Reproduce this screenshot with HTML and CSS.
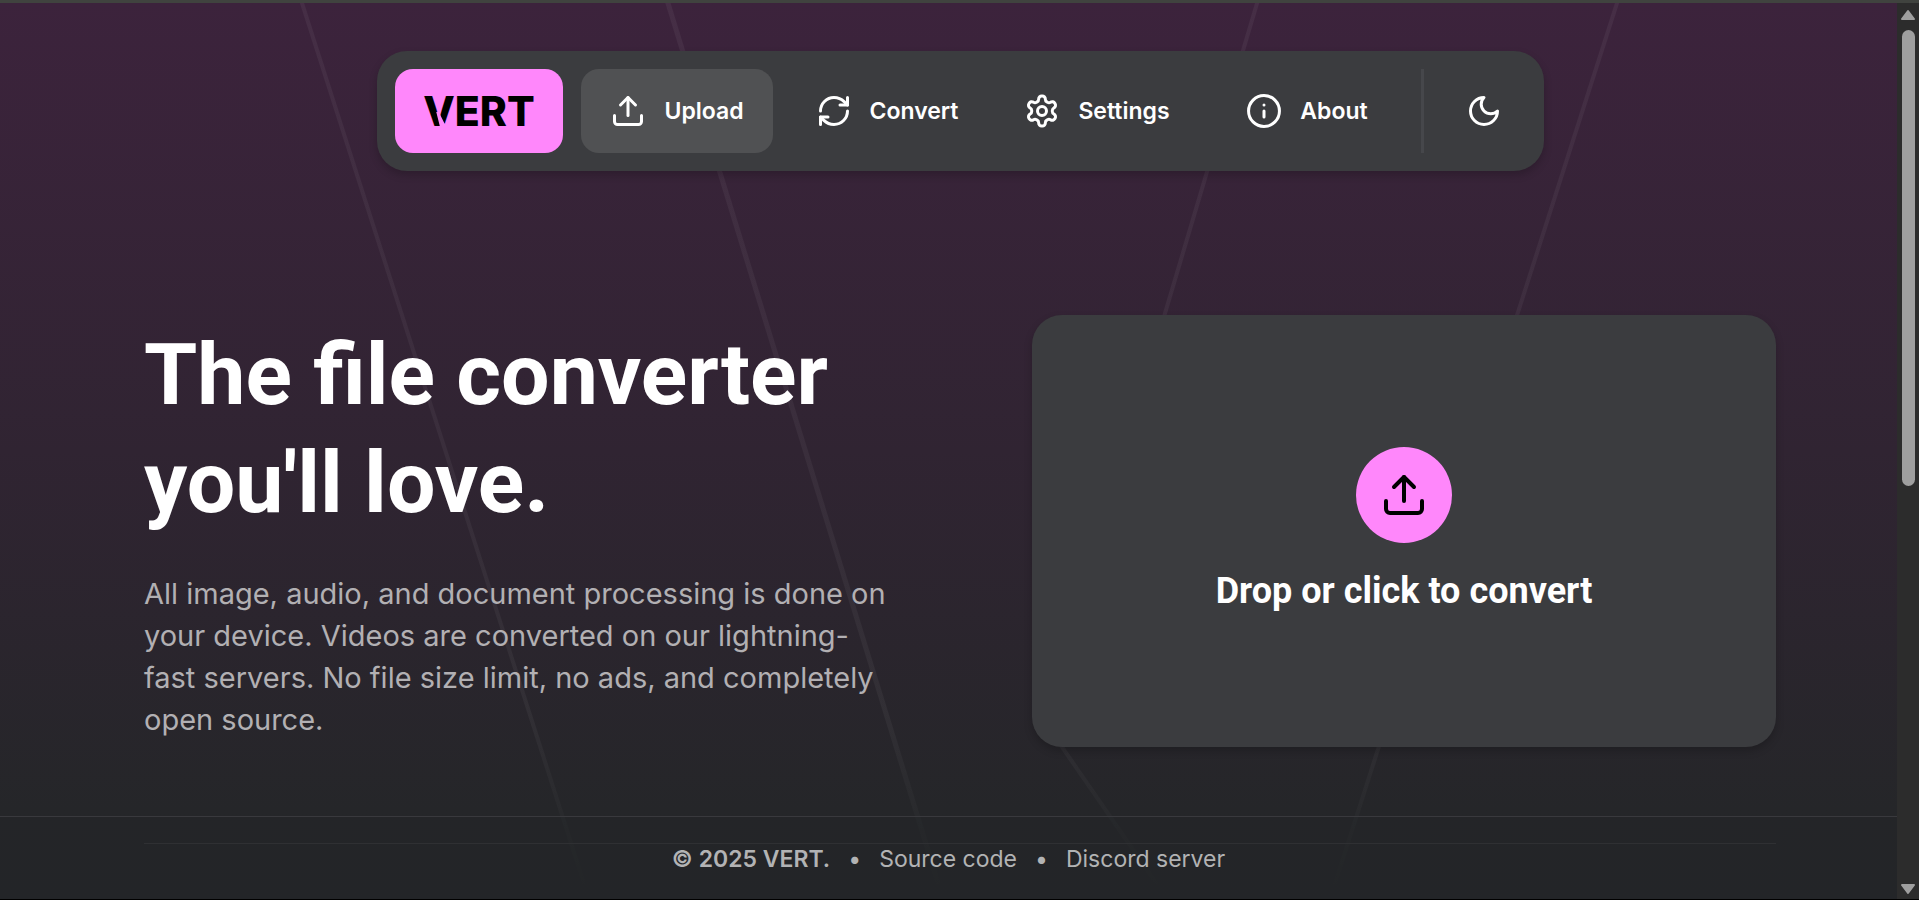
FILE: index.html
```html
<!DOCTYPE html>
<html lang="en">
<head>
<meta charset="utf-8">
<meta name="viewport" content="width=device-width, initial-scale=1">
<title>VERT</title>
<link rel="stylesheet" href="styles.css">
</head>
<body>
<div class="window">
  <div class="page">
    <svg class="backdrop" viewBox="0 0 1897 896" preserveAspectRatio="none" aria-hidden="true">
      <defs>
        <linearGradient id="fade" gradientUnits="userSpaceOnUse" x1="0" y1="0" x2="0" y2="890">
          <stop offset="0" stop-color="#fff" stop-opacity=".05"/>
          <stop offset=".8" stop-color="#fff" stop-opacity=".045"/>
          <stop offset="1" stop-color="#fff" stop-opacity="0"/>
        </linearGradient>
      </defs>
      <g fill="none" stroke="url(#fade)">
        <path stroke-width="4" d="M301 -3L588 893"/>
        <path stroke-width="5" d="M667 -3L942 893"/>
        <path stroke-width="4" d="M1258 -3L1044 718L1163 890"/>
        <path stroke-width="4" d="M1618 -3L1331 893"/>
      </g>
    </svg>

    <header class="top">
      <nav class="nav">
        <a class="logo" href="#"><span class="logo-text">VERT</span></a>
        <div class="links">
          <a class="link active" href="#">
            <svg class="icon" viewBox="0 0 24 24" aria-hidden="true"><path d="M12 3v12"/><path d="m17 8-5-5-5 5"/><path d="M21 15v4a2 2 0 0 1-2 2H5a2 2 0 0 1-2-2v-4"/></svg>
            <span>Upload</span>
          </a>
          <a class="link" href="#">
            <svg class="icon" viewBox="0 0 24 24" aria-hidden="true"><path d="M3 12a9 9 0 0 1 9-9 9.75 9.75 0 0 1 6.74 2.74L21 8"/><path d="M21 3v5h-5"/><path d="M21 12a9 9 0 0 1-9 9 9.75 9.75 0 0 1-6.74-2.74L3 16"/><path d="M8 16H3v5"/></svg>
            <span>Convert</span>
          </a>
          <a class="link" href="#">
            <svg class="icon" viewBox="0 0 24 24" aria-hidden="true"><path d="M12.22 2h-.44a2 2 0 0 0-2 2v.18a2 2 0 0 1-1 1.73l-.43.25a2 2 0 0 1-2 0l-.15-.08a2 2 0 0 0-2.73.73l-.22.38a2 2 0 0 0 .73 2.73l.15.1a2 2 0 0 1 1 1.72v.51a2 2 0 0 1-1 1.74l-.15.09a2 2 0 0 0-.73 2.73l.22.38a2 2 0 0 0 2.73.73l.15-.08a2 2 0 0 1 2 0l.43.25a2 2 0 0 1 1 1.73V20a2 2 0 0 0 2 2h.44a2 2 0 0 0 2-2v-.18a2 2 0 0 1 1-1.73l.43-.25a2 2 0 0 1 2 0l.15.08a2 2 0 0 0 2.73-.73l.22-.39a2 2 0 0 0-.73-2.73l-.15-.08a2 2 0 0 1-1-1.74v-.5a2 2 0 0 1 1-1.74l.15-.09a2 2 0 0 0 .73-2.73l-.22-.38a2 2 0 0 0-2.73-.73l-.15.08a2 2 0 0 1-2 0l-.43-.25a2 2 0 0 1-1-1.73V4a2 2 0 0 0-2-2z"/><circle cx="12" cy="12" r="3"/></svg>
            <span>Settings</span>
          </a>
          <a class="link" href="#">
            <svg class="icon" viewBox="0 0 24 24" aria-hidden="true"><circle cx="12" cy="12" r="10.3"/><path d="M12 16v-4"/><path d="M12 8h.01"/></svg>
            <span>About</span>
          </a>
        </div>
        <span class="divider"></span>
        <button class="theme" type="button" aria-label="Toggle theme">
          <svg class="icon" viewBox="0 0 24 24" aria-hidden="true"><path d="M12 3a6 6 0 0 0 9 9 9 9 0 1 1-9-9Z"/></svg>
        </button>
      </nav>
    </header>

    <main class="hero">
      <div class="intro">
        <h1 class="title">The file converter<br>you'll love.</h1>
        <p class="lead">All image, audio, and document processing is done on your device. Videos are converted on our lightning-fast servers. No file size limit, no ads, and completely open source.</p>
      </div>
      <button class="drop" type="button">
        <span class="drop-badge">
          <svg class="drop-icon" viewBox="0 0 24 24" aria-hidden="true"><path d="M12 3v12"/><path d="m17 8-5-5-5 5"/><path d="M21 15v4a2 2 0 0 1-2 2H5a2 2 0 0 1-2-2v-4"/></svg>
        </span>
        <span class="drop-text">Drop or click to convert</span>
      </button>
    </main>

    <footer class="footer">
      <hr class="rule">
      <div class="foot-row">
        <span class="copy">© 2025 VERT.</span>
        <span>•</span>
        <a class="foot-link" href="#">Source code</a>
        <span>•</span>
        <a class="foot-link" href="#">Discord server</a>
      </div>
    </footer>
  </div>

  <div class="scrollbar" aria-hidden="true">
    <svg class="arrow" viewBox="0 0 16 12"><path d="M8 2L14 10H2Z"/></svg>
    <div class="track"><div class="thumb"></div></div>
    <svg class="arrow" viewBox="0 0 16 12"><path d="M8 10L2 2H14Z"/></svg>
  </div>
</div>
</body>
</html>
```
FILE: styles.css
```css
* { box-sizing: border-box; }

body {
  margin: 0;
  background: #000;
  color: #fff;
  font-family: Inter, "Liberation Sans", sans-serif;
}

a { color: inherit; text-decoration: none; }
button { border: 0; padding: 0; color: inherit; font: inherit; cursor: pointer; }

.window {
  display: flex;
  min-height: 100vh;
  border-top: 3px solid #40433f;
  border-bottom: 1px solid #000;
}

.page {
  position: relative;
  flex: 1;
  display: flex;
  flex-direction: column;
  background: linear-gradient(#3c233c 0%, #302432 50%, #252629 90%, #242628 100%);
}

.backdrop {
  position: absolute;
  inset: 0;
  width: 100%;
  height: 100%;
}

.top {
  position: relative;
  display: flex;
  justify-content: center;
  padding: 48px 24px 0 48px;
}

.nav {
  display: flex;
  gap: 18px;
  padding: 18px;
  border-radius: 30px;
  background: #3b3c3f;
  box-shadow: 0 4px 9px rgba(0, 0, 0, .2);
}

.logo {
  display: grid;
  place-items: center;
  width: 168px;
  height: 84px;
  border-radius: 18px;
  background: #ff87fb;
  color: #000;
}

.logo-text {
  position: relative;
  font-size: 41px;
  font-weight: 800;
  line-height: 48px;
}

/* notch that separates the two arms of the V */
.logo-text::after {
  content: "";
  position: absolute;
  left: 0;
  top: 0;
  width: 30px;
  height: 48px;
  background: #ff87fb;
  clip-path: polygon(13px 25px, 17px 41px, 25px 41px, 21px 36px, 17px 28px, 16px 25px);
}

.links {
  display: grid;
  grid-template-columns: repeat(4, 192px);
  gap: 18px;
}

.link {
  display: flex;
  align-items: center;
  justify-content: center;
  gap: 18px;
  border-radius: 18px;
  font-size: 23px;
  font-weight: 600;
}

.link.active { background: #505153; }

.icon, .drop-icon {
  width: 36px;
  height: 36px;
  fill: none;
  stroke: currentColor;
  stroke-width: 2;
  stroke-linecap: round;
  stroke-linejoin: round;
  overflow: visible;
}

.divider { width: 3px; background: #46474b; }

.theme {
  display: grid;
  place-items: center;
  width: 84px;
  background: none;
}

.hero {
  position: relative;
  flex: 1;
  display: grid;
  grid-template-columns: 1fr 1fr;
  gap: 144px;
  align-items: center;
  padding: 75px 121px 0 144px;
}

.title {
  margin: 0 0 36px;
  font-family: Roboto, sans-serif;
  font-size: 86px;
  font-weight: 700;
  line-height: 108px;
}

.lead {
  margin: 0;
  color: #b2b0b3;
  font-size: 29px;
  line-height: 42px;
}

.drop {
  display: flex;
  flex-direction: column;
  align-items: center;
  justify-content: center;
  gap: 24px;
  height: 432px;
  border-radius: 30px;
  background: #3b3c3f;
  box-shadow: 0 4px 9px rgba(0, 0, 0, .2);
}

.drop-badge {
  display: grid;
  place-items: center;
  width: 96px;
  height: 96px;
  border-radius: 50%;
  background: #ff87fb;
  color: #000;
}

.drop-icon { width: 48px; height: 48px; }

.drop-text {
  font-family: Roboto, sans-serif;
  font-size: 36px;
  font-weight: 700;
  line-height: 48px;
}

.footer {
  position: relative;
  height: 83px;
  border-top: 1px solid #39393d;
  background: rgba(36, 38, 40, .4);
}

.rule {
  margin: 26px 121px 0 144px;
  border: 0;
  border-top: 1px solid #2f3033;
}

.foot-row {
  display: flex;
  justify-content: center;
  gap: 18px;
  color: #b2b3b4;
  font-size: 23px;
  line-height: 30px;
}

.copy { font-weight: 600; }

.scrollbar {
  display: flex;
  flex-direction: column;
  align-items: center;
  width: 22px;
  padding: 6px 0 4px;
  background: #2c2c2c;
}

.arrow { width: 16px; height: 12px; fill: #9f9f9f; stroke: #9f9f9f; stroke-width: 2; stroke-linejoin: round; }

.track { flex: 1; width: 13px; padding: 9px 0; }

.thumb { height: 54%; border-radius: 7px; background: #9f9f9f; }
```
